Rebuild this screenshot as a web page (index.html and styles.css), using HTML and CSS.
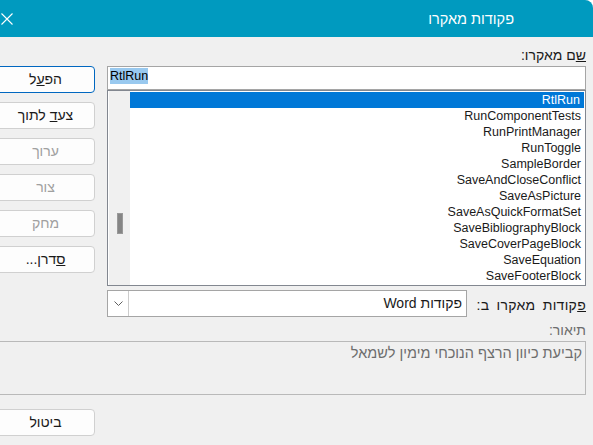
FILE: index.html
```html
<!DOCTYPE html>
<html lang="he">
<head>
<meta charset="utf-8">
<title>פקודות מאקרו</title>
<link rel="stylesheet" href="styles.css">
</head>
<body>
<div class="dialog" dir="rtl">
  <div class="titlebar">
    <span class="title">פקודות מאקרו</span>
    <span class="close">
      <svg width="12" height="12" viewBox="0 0 12 12"><path d="M0.5 0.5 L11.5 11.5 M11.5 0.5 L0.5 11.5" stroke="#fff" stroke-width="1.1" fill="none"/></svg>
    </span>
  </div>
  <div class="content">
    <div class="top">
      <div class="main">
        <div class="label"><u>ש</u>ם מאקרו:</div>
        <div class="namebox"><span class="sel">RtlRun</span></div>
        <div class="list">
          <div class="items">
            <div class="item selected">RtlRun</div>
            <div class="item">RunComponentTests</div>
            <div class="item">RunPrintManager</div>
            <div class="item">RunToggle</div>
            <div class="item">SampleBorder</div>
            <div class="item">SaveAndCloseConflict</div>
            <div class="item">SaveAsPicture</div>
            <div class="item">SaveAsQuickFormatSet</div>
            <div class="item">SaveBibliographyBlock</div>
            <div class="item">SaveCoverPageBlock</div>
            <div class="item">SaveEquation</div>
            <div class="item">SaveFooterBlock</div>
          </div>
          <div class="scrollbar"><div class="thumb"></div></div>
        </div>
        <div class="comborow">
          <div class="label combo-label"><u>פ</u>קודות מאקרו ב:</div>
          <div class="combo">
            <span class="combo-text">פקודות Word</span>
            <span class="combo-btn">
              <svg width="9" height="5" viewBox="0 0 9 5"><path d="M0.5 0.5 L4.5 4.5 L8.5 0.5" stroke="#5f5f5f" stroke-width="1" fill="none"/></svg>
            </span>
          </div>
        </div>
      </div>
      <div class="buttons">
        <button class="btn default">הפ<u>ע</u>ל</button>
        <button class="btn">צע<u>ד</u> לתוך</button>
        <button class="btn" disabled>ערוך</button>
        <button class="btn" disabled>צור</button>
        <button class="btn" disabled>מחק</button>
        <button class="btn"><u>ס</u>דרן...</button>
      </div>
    </div>
    <div class="label muted desc-label">תיאור:</div>
    <div class="desc">קביעת כיוון הרצף הנוכחי מימין לשמאל</div>
    <div class="footer"><button class="btn">ביטול</button></div>
  </div>
</div>
</body>
</html>
```
FILE: styles.css
```css
html, body {
  margin: 0;
  padding: 0;
  background: #ffffff;
  overflow: hidden;
  font-family: "Liberation Sans", "DejaVu Sans", sans-serif;
}

.dialog {
  width: 597px;
  height: 445px;
  margin-left: -4px;
  background: #f0f0f0;
  border-top-right-radius: 8px;
  overflow: hidden;
  color: #1a1a1a;
}

.titlebar {
  height: 37px;
  background: #009abf;
  display: flex;
  align-items: center;
  justify-content: space-between;
  padding: 0 79px 0 5px;
  box-sizing: border-box;
}

.title {
  color: #ffffff;
  font-size: 14.5px;
  line-height: 18px;
  padding-top: 1px;
}

.close {
  display: flex;
  align-items: center;
  margin-top: 1px;
}

.content {
  padding: 10px 7px 0 0;
}

.top {
  display: grid;
  grid-template-columns: 479px 99px;
  column-gap: 12px;
}

.label {
  font-size: 14px;
  line-height: 16px;
  color: #1a1a1a;
}

.main > .label {
  margin-bottom: 3px;
}

.namebox {
  height: 24px;
  box-sizing: border-box;
  border: 1px solid #a5a5a5;
  background: #ffffff;
  direction: ltr;
  text-align: left;
  padding: 1px 2px;
  font-size: 12.5px;
}

.sel {
  display: inline-block;
  background: #99c9ef;
  line-height: 16px;
  color: #000;
}

.list {
  height: 196px;
  box-sizing: border-box;
  border: 1px solid #828790;
  background: #ffffff;
  display: flex;
}

.items {
  flex: 1;
  padding: 1px 0 1px 0;
}

.item {
  height: 16px;
  line-height: 16px;
  font-size: 12.5px;
  text-align: right;
  padding-right: 4px;
  color: #1a1a1a;
  white-space: nowrap;
}

.item.selected {
  background: #0078d7;
  color: #ffffff;
  margin-right: 1px;
}

.scrollbar {
  width: 22px;
  background: #f0f0f0;
  border-left: 1px solid #ffffff;
  box-sizing: border-box;
}

.thumb {
  width: 6px;
  height: 21px;
  margin-top: 122px;
  margin-right: 7px;
  background: #858585;
  box-sizing: border-box;
  border: 1px solid #999999;
}

.comborow {
  display: flex;
  align-items: center;
  margin-top: 4px;
  height: 27px;
}

.combo-label {
  flex: 1;
  padding-top: 2px;
  word-spacing: 3px;
  letter-spacing: 0.3px;
}

.combo {
  flex: 0 0 360px;
  height: 27px;
  box-sizing: border-box;
  border: 1px solid #a5a5a5;
  background: #ffffff;
  display: flex;
  align-items: stretch;
}

.combo-text {
  flex: 1;
  font-size: 14px;
  line-height: 25px;
  padding-right: 4px;
}

.combo-btn {
  width: 20px;
  border-right: 1px solid #cccccc;
  display: flex;
  align-items: center;
  justify-content: center;
}

.buttons {
  padding-top: 19px;
  display: flex;
  flex-direction: column;
  gap: 9px;
}

.btn {
  height: 27px;
  width: 99px;
  box-sizing: border-box;
  border: 1px solid #d0d0d0;
  border-radius: 4px;
  background: #fdfdfd;
  font-family: "Liberation Sans", "DejaVu Sans", sans-serif;
  font-size: 14px;
  color: #1a1a1a;
  padding: 0;
  line-height: 25px;
}

.btn.default {
  border-color: #0067c0;
}

.btn:disabled {
  color: #a0a0a0;
}

.muted {
  color: #6d6d6d;
}

.desc-label {
  margin-top: 5px;
}

.desc {
  margin-top: 3px;
  height: 54px;
  box-sizing: border-box;
  border: 1px solid #b9b9b9;
  background: #f0f0f0;
  color: #6d6d6d;
  font-size: 14.5px;
  line-height: 16px;
  padding: 3px 3px 0 3px;
}

.footer {
  display: flex;
  justify-content: flex-end;
  margin-top: 14px;
}
```
